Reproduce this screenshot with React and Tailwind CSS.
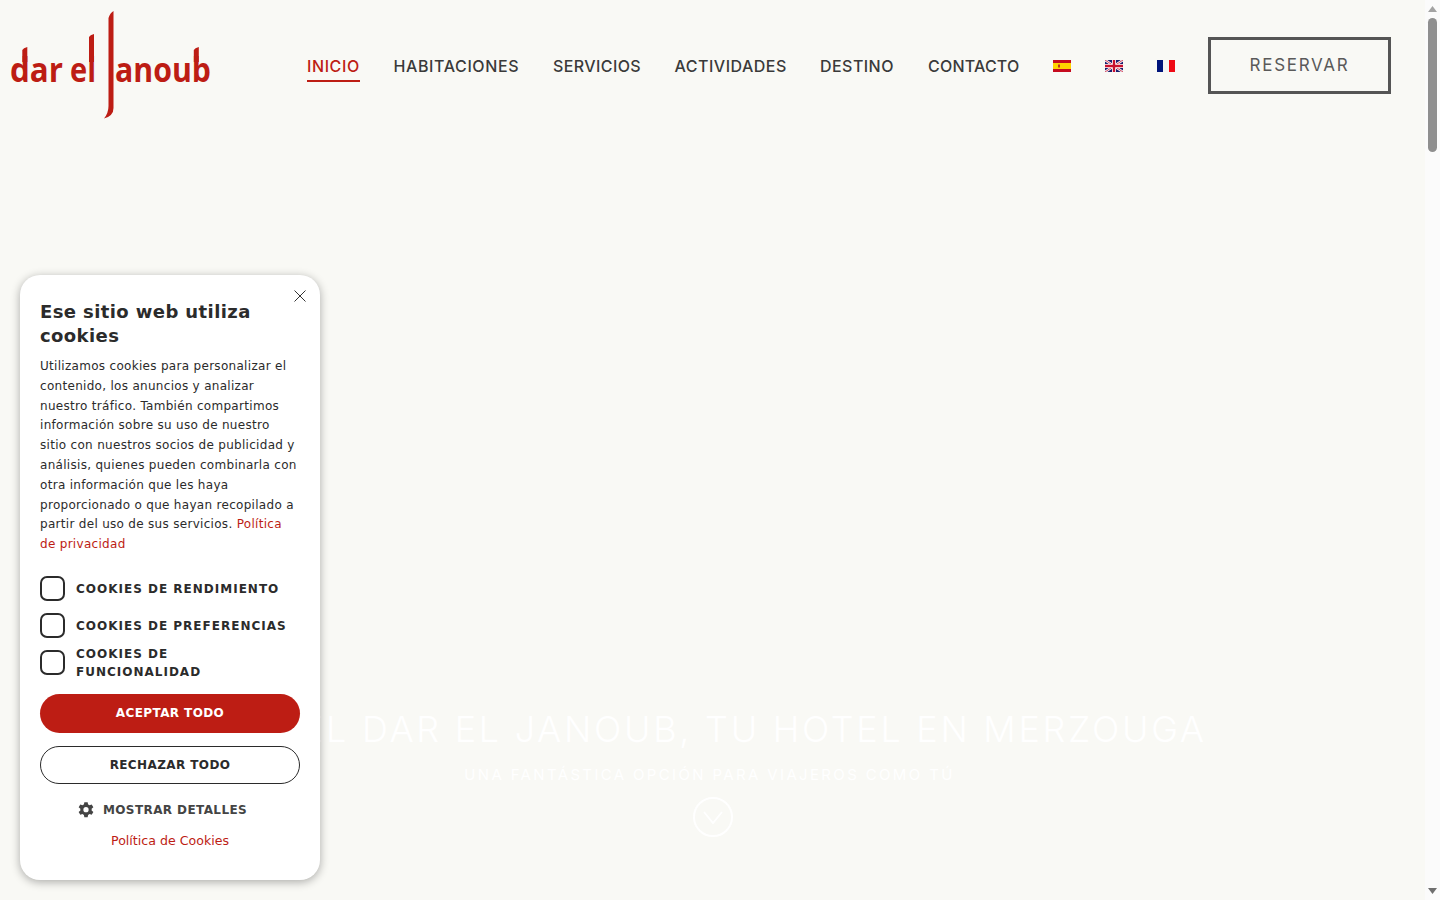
import React from "react";

const Logo = () => (
  <svg width="204" height="112" viewBox="0 0 204 112" className="block">
    <g fill="#bd1d14" style={{ fontFamily: "'Open Sans', sans-serif", fontWeight: 700 }}>
      <text x="0" y="71.500" fontSize="33.500" textLength="53" lengthAdjust="spacingAndGlyphs">dar</text>
      <text x="60" y="71.500" fontSize="33.500" textLength="26" lengthAdjust="spacingAndGlyphs">el</text>
      <text x="105" y="71.500" fontSize="33.500" textLength="96" lengthAdjust="spacingAndGlyphs">anoub</text>
    </g>
    <path d="M79 52 L79 27 Q80 25 84 24 L84 52 Z" fill="#bd1d14" />
    <path d="M12.300 52 L12.300 40 Q13.300 38 17.300 37 L17.300 52 Z" fill="#bd1d14" />
    <path d="M183.800 52 L183.800 40 Q184.800 38 188.800 37 L188.800 52 Z" fill="#bd1d14" />
    <path d="M98.500 8 Q100 3 103.500 1 L103.500 98 Q103.500 106 94 108.500 Q98.500 103 98.500 96 Z" fill="#bd1d14" />
  </svg>
);

const Spain = () => (
  <svg width="18" height="12" viewBox="0 0 18 12" className="block">
    <rect width="18" height="12" fill="#c60b1e" />
    <rect y="3" width="18" height="6" fill="#ffd400" />
    <rect x="5" y="4.500" width="2" height="3" fill="#c0381c" />
  </svg>
);

const UK = () => (
  <svg width="18" height="12" viewBox="0 0 18 12" className="block">
    <rect width="18" height="12" fill="#1a1f6e" />
    <path d="M0 0 L18 12 M18 0 L0 12" stroke="#fff" strokeWidth="2.400" />
    <path d="M0 0 L18 12 M18 0 L0 12" stroke="#c8102e" strokeWidth="0.800" />
    <path d="M9 0 V12 M0 6 H18" stroke="#fff" strokeWidth="4" />
    <path d="M9 0 V12 M0 6 H18" stroke="#c8102e" strokeWidth="2.400" />
  </svg>
);

const France = () => (
  <svg width="18" height="12" viewBox="0 0 18 12" className="block">
    <rect width="6" height="12" fill="#00147a" />
    <rect x="6" width="6" height="12" fill="#f4f4f4" />
    <rect x="12" width="6" height="12" fill="#ef0a14" />
  </svg>
);

const Check = ({ children }) => (
  <div className="flex items-center gap-[11px] h-[25px]">
    <span className="w-[25px] h-[25px] shrink-0 rounded-[7px] border-2 border-[#2b2b2b] bg-white"></span>
    <span className="max-w-[215px] pt-[1px] text-[12px] leading-[18px] font-bold tracking-[1px] text-[#2b2b2b]">{children}</span>
  </div>
);

export default function App() {
  return (
    <div className="relative h-[900px] w-full overflow-hidden flex bg-[#f9f9f5] font-['Inter',sans-serif]">
      <div className="flex-1 min-w-0 flex flex-col h-full">
        <header className="flex items-start pl-[10px] pt-[10px] h-[132px]">
          <Logo />
          <nav className="ml-[93px] mt-[27px] flex items-center gap-[34px] text-[16px] font-medium text-[#3a3a3a] h-[58px]">
            <a className="relative text-[#bd1d14] tracking-[0.600px] w-[52.500px] whitespace-nowrap">
              INICIO
              <span className="absolute left-0 right-0 -bottom-[4px] h-[2px] bg-[#bd1d14]"></span>
            </a>
            <a className="w-[125.500px] whitespace-nowrap tracking-[0.600px]">HABITACIONES</a>
            <a className="w-[87.500px] whitespace-nowrap tracking-[0.400px]">SERVICIOS</a>
            <a className="w-[111.500px] whitespace-nowrap tracking-[0.500px]">ACTIVIDADES</a>
            <a className="w-[74px] whitespace-nowrap tracking-[0.450px]">DESTINO</a>
            <a className="w-[91px] whitespace-nowrap tracking-[0.200px]">CONTACTO</a>
            <Spain />
            <UK />
            <France />
          </nav>
          <a className="ml-[33px] mt-[27px] w-[183px] h-[57px] flex items-center justify-center border-[3px] border-[#555555] text-[#5a5a5a] text-[17px] tracking-[1.700px]">
            RESERVAR
          </a>
        </header>
        <section className="flex-1 flex flex-col items-center pt-[575px] min-h-0">
          <h1 className="text-[36px] leading-[44px] font-light text-white tracking-[2.700px] whitespace-nowrap">
            HOTEL DAR EL JANOUB, TU HOTEL EN MERZOUGA
          </h1>
          <p className="mt-[14px] mr-[6px] text-[15px] leading-[20px] text-white tracking-[2.350px] whitespace-nowrap">
            UNA FANTÁSTICA OPCIÓN PARA VIAJEROS COMO TÚ
          </p>
          <div className="mt-[11.500px] w-[40px] h-[40px] rounded-full border-2 border-white flex items-center justify-center">
            <svg width="20" height="20" viewBox="0 0 20 20" fill="none" stroke="#ffffff" strokeWidth="1.800">
              <path d="M1 5 L10 16 L19 5" />
            </svg>
          </div>
        </section>
      </div>

      <div className="w-[15px] shrink-0 h-full bg-[#fbfbfb] flex flex-col items-center">
        <div className="h-[18px] w-full flex items-center justify-center">
          <svg width="9" height="6" viewBox="0 0 9 6"><path d="M4.500 0 L9 6 H0 Z" fill="#a3a3a3" /></svg>
        </div>
        <div className="w-[9px] h-[134px] rounded-full bg-[#8f8f8f]"></div>
        <div className="flex-1"></div>
        <div className="h-[18px] w-full flex items-center justify-center">
          <svg width="9" height="6" viewBox="0 0 9 6"><path d="M0 0 H9 L4.500 6 Z" fill="#6f6f6f" /></svg>
        </div>
      </div>

      <aside className="absolute left-[20px] top-[275px] w-[300px] h-[605px] rounded-[20px] bg-white shadow-[0_2px_10px_rgba(0,0,0,0.32)] font-['DejaVu_Sans',sans-serif] text-[#2b2b2b] px-[20px] pt-[25px]">
        <svg className="absolute right-[14px] top-[15px]" width="12" height="12" viewBox="0 0 12 12" stroke="#333" strokeWidth="1" fill="none">
          <path d="M0.500 0.500 L11.500 11.500 M11.500 0.500 L0.500 11.500" />
        </svg>
        <h2 className="text-[18px] leading-[24px] font-bold tracking-[0.400px]">Ese sitio web utiliza cookies</h2>
        <p className="mt-[9px] h-[198px] text-[12px] leading-[19.800px] tracking-[0.300px]">
          Utilizamos cookies para personalizar el contenido, los anuncios y analizar nuestro tráfico. También compartimos información sobre su uso de nuestro sitio con nuestros socios de publicidad y análisis, quienes pueden combinarla con otra información que les haya proporcionado o que hayan recopilado a partir del uso de sus servicios. <a className="text-[#bd1d14]">Política de privacidad</a>
        </p>
        <div className="mt-[21px] flex flex-col gap-[12px]">
          <Check>COOKIES DE RENDIMIENTO</Check>
          <Check>COOKIES DE PREFERENCIAS</Check>
          <Check>COOKIES DE FUNCIONALIDAD</Check>
        </div>
        <button className="mt-[19px] w-full h-[39px] pb-[1px] rounded-full bg-[#bd1d14] text-white text-[12px] font-bold tracking-[0.400px]">
          ACEPTAR TODO
        </button>
        <button className="mt-[13px] w-full h-[38px] rounded-full border border-[#2b2b2b] bg-white text-[#2b2b2b] text-[12px] font-bold tracking-[0.400px]">
          RECHAZAR TODO
        </button>
        <div className="mt-[17px] pr-[16px] flex items-center justify-center gap-[8px] text-[#444444] text-[12px] font-bold tracking-[0.400px] leading-[18px]">
          <svg width="18" height="18" viewBox="0 0 24 24" fill="#444444">
            <path fillRule="evenodd" d="M14.2 1.500 L14.800 4.500 C15.500 4.800 16.100 5.100 16.700 5.600 L19.600 4.600 L21.800 8.400 L19.500 10.400 C19.600 11.100 19.600 11.900 19.500 12.600 L21.800 14.600 L19.600 18.400 L16.700 17.400 C16.100 17.900 15.500 18.200 14.800 18.500 L14.200 21.500 L9.800 21.500 L9.200 18.500 C8.500 18.200 7.900 17.900 7.300 17.400 L4.400 18.400 L2.200 14.600 L4.500 12.600 C4.400 11.900 4.400 11.100 4.500 10.400 L2.200 8.400 L4.400 4.600 L7.300 5.600 C7.900 5.100 8.500 4.800 9.200 4.500 L9.800 1.500 Z M12 8 A3.500 3.500 0 1 0 12 15 A3.500 3.500 0 1 0 12 8 Z" />
          </svg>
          MOSTRAR DETALLES
        </div>
        <div className="mt-[12px] text-center text-[12.600px] leading-[20px] text-[#bd1d14]">Política de Cookies</div>
      </aside>
    </div>
  );
}
